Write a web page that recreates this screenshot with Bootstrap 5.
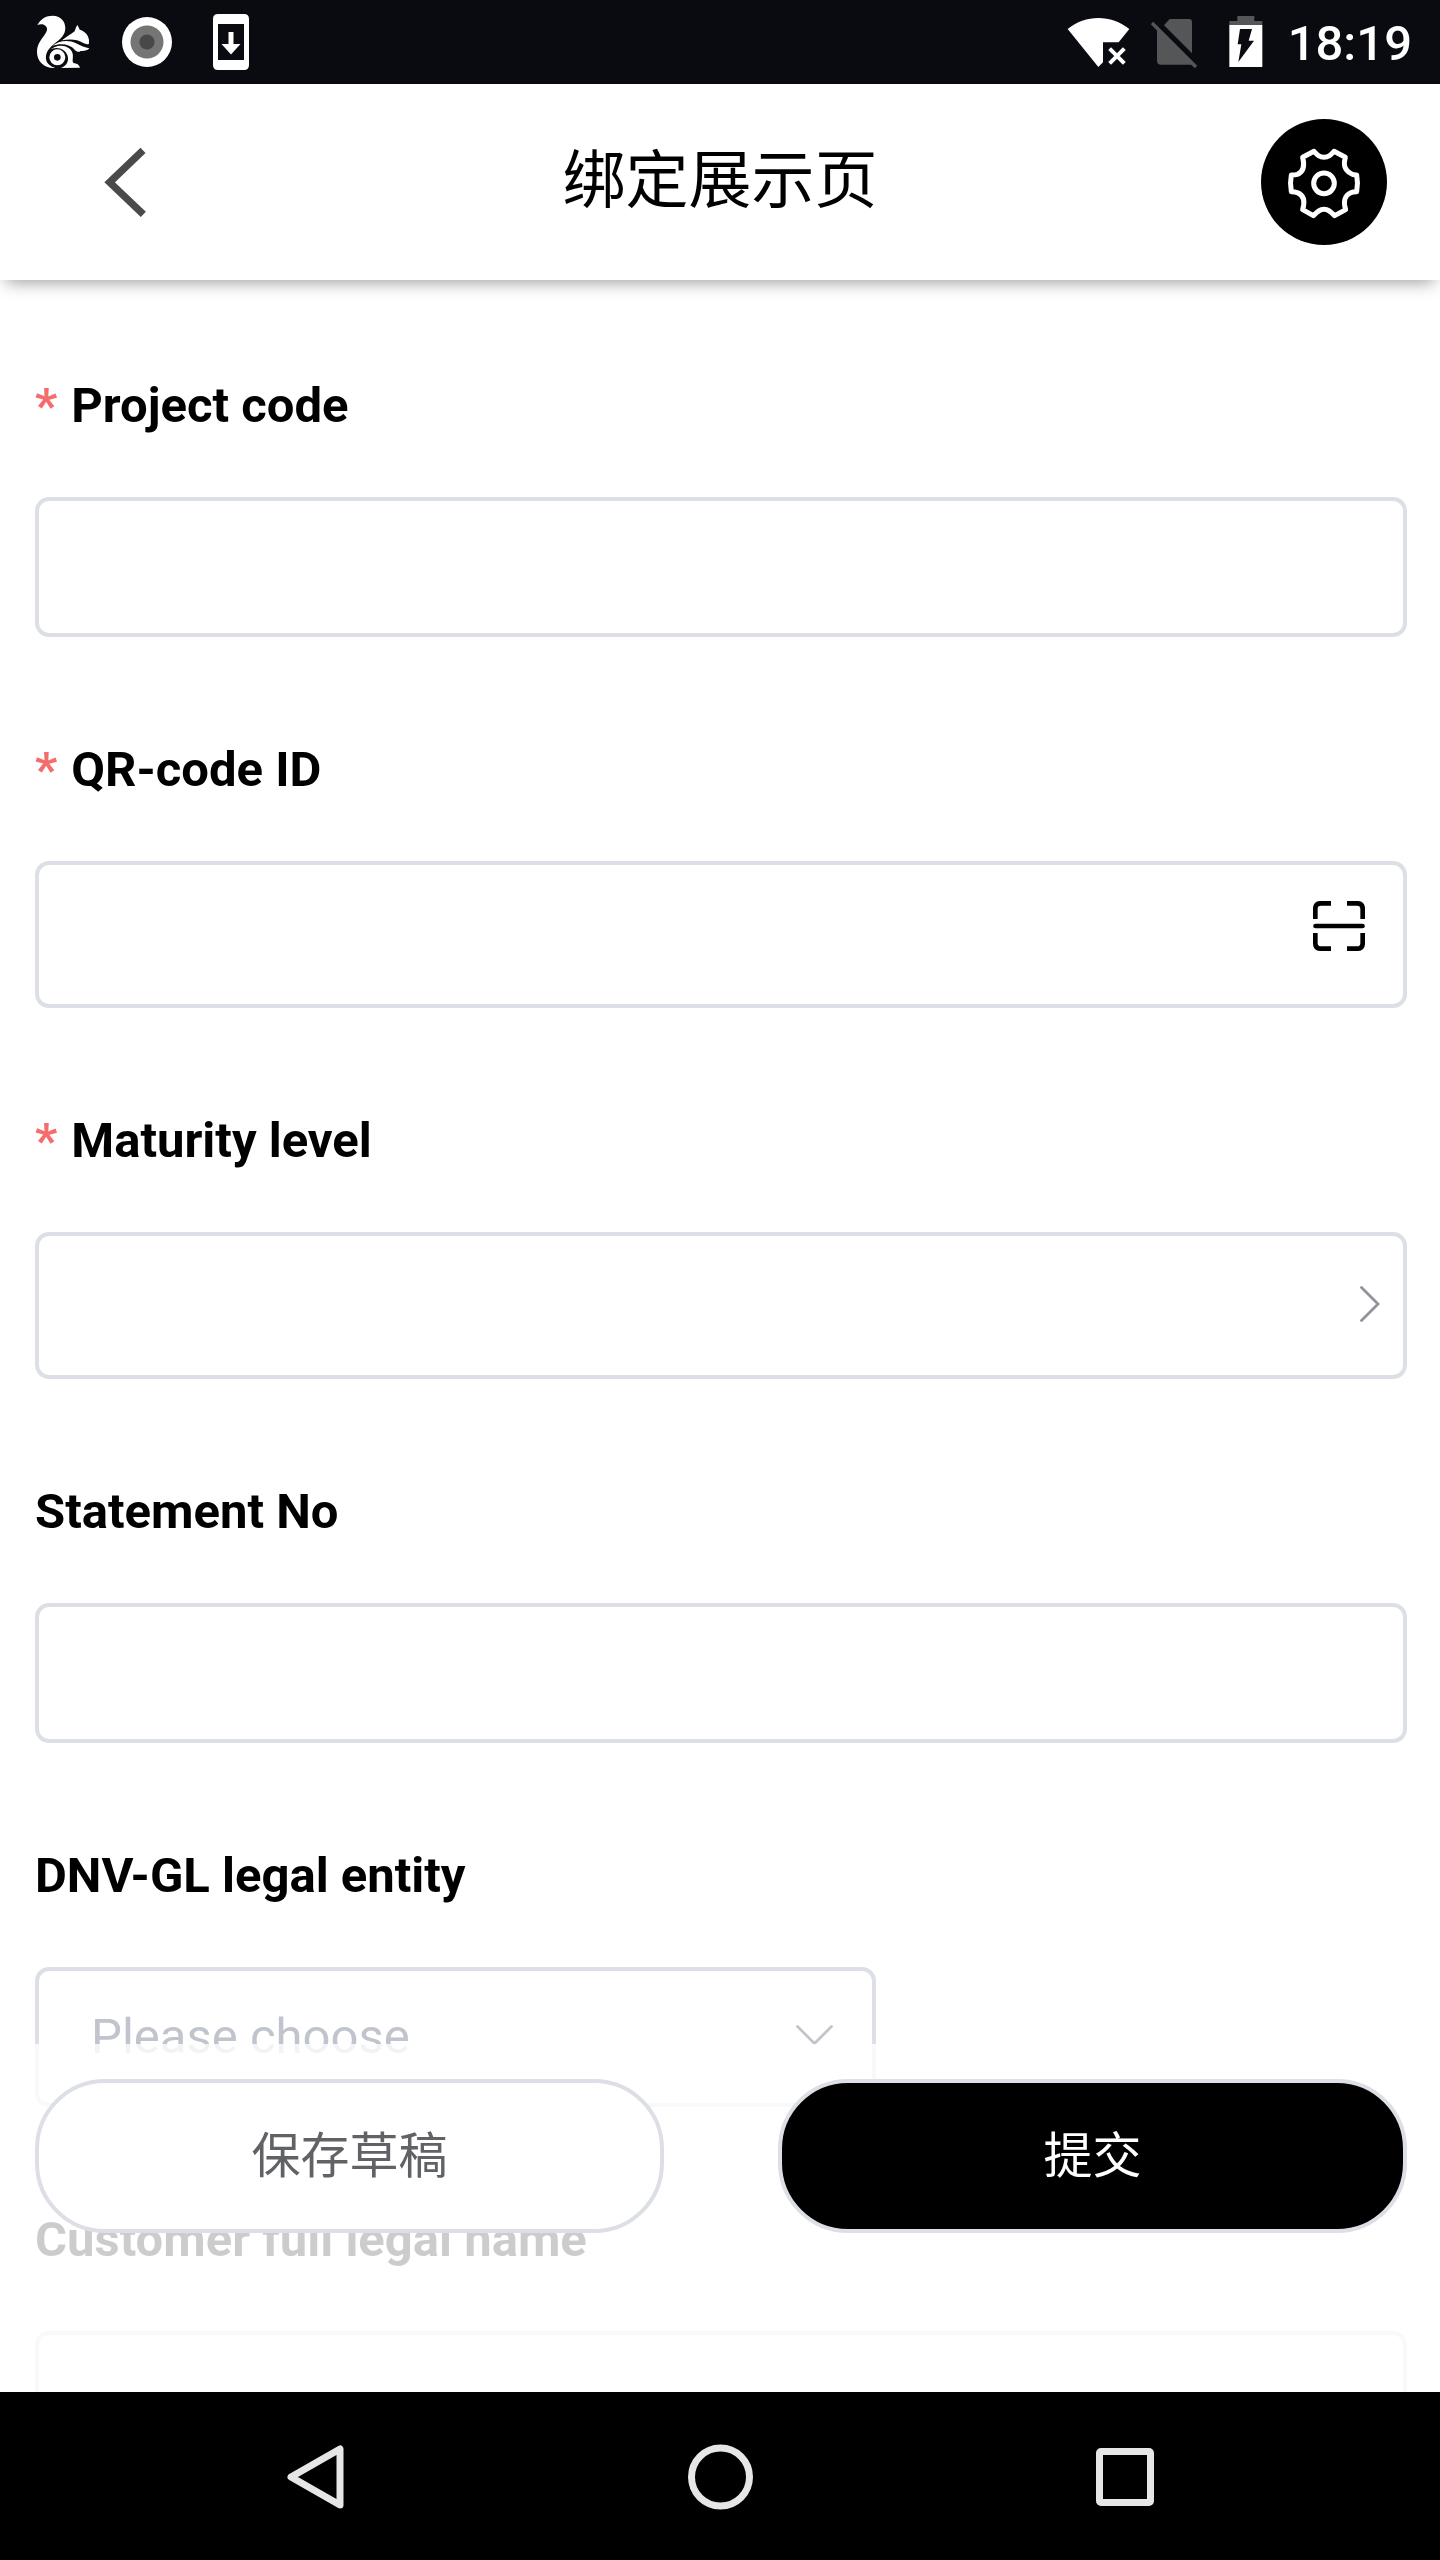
<!DOCTYPE html>
<html lang="zh-CN">
<head>
<meta charset="utf-8">
<meta name="viewport" content="width=device-width, initial-scale=1">
<title>绑定展示页</title>
<link href="https://cdn.jsdelivr.net/npm/bootstrap@5.3.0/dist/css/bootstrap.min.css" rel="stylesheet">
<style>
  body { font-family: Roboto, "Noto Sans CJK SC", sans-serif; font-size: 49px; color: #000; background: #fff; }
  svg { display: block; flex: none; }
  .screen { height: 2560px; }
  .status-bar { height: 84px; background: #0a0b10; padding: 0 28px 0 36px; flex: none; }
  .icon-record { margin-left: 32px; }
  .icon-download { margin-left: 41px; }
  .icon-system { margin-right: -2px; }
  .clock { font-weight: 500; line-height: 84px; padding-top: 2px; }
  .title-bar { height: 196px; flex: none; padding: 0 53px; background: #fff; z-index: 2; box-shadow: 0 8px 16px -6px rgba(0,0,0,.4); }
  .page-title { font-size: 63px; line-height: 1; font-weight: 400; padding-bottom: 3px; }
  .head-btn { width: 126px; height: 126px; padding: 0; border: 0; }
  .back-btn { padding-left: 51px; }
  .form-area { padding: 55px 33px 0 35px; }
  .field { margin-bottom: 62px; }
  .field-label { display: block; height: 140px; line-height: 142px; margin: 0 0 22px; font-weight: 700; white-space: nowrap; }
  .req::before { content: "*"; color: #f56c6c; margin-right: 14px; }
  .field-box { height: 140px; border: 4px solid #dcdfe6; border-radius: 14px; background: #fff; }
  .field-box.tall { height: 147px; }
  .scan-box { padding: 36px 38px 0 0; }
  .level-box { padding: 0 23px 3px 0; }
  .choose { width: 841px; padding: 0 39px 0 52px; color: #c0c4cc; }
  .choose svg { margin-top: -4px; }
  .action-bar { height: 348px; padding: 35px 33px 0 35px; background: rgba(255,255,255,.8); }
  .pill { width: 629px; height: 154px; border: 4px solid #dcdfe6; border-radius: 70px; font-size: 49px; line-height: 1; }
  .pill-plain, .pill-plain:hover { background: #fff; color: #606266; }
  .pill-dark, .pill-dark:hover { background: #000; color: #fff; border-color: #dcdfe6; }
  .nav-keys { height: 168px; flex: none; padding: 1px 285px 0 286px; }
</style>
</head>
<body>
<div class="screen d-flex flex-column overflow-hidden">

  <div class="status-bar d-flex justify-content-between text-white">
    <div class="d-flex align-items-center">
      <svg width="54" height="54" viewBox="108 45 162 162" fill="#fff">
        <path d="M112 76C122 56 138 47 158 47C182 47 196 64 196 84C196 106 180 118 163 131C146 145 136 158 138 178C141 192 152 200 166 204C132 206 111 184 111 156C111 134 122 120 134 104C142 92 144 84 136 77C128 71 118 72 112 76Z"/>
        <path d="M186 121C198 112 210 104 224 94C226 86 229 80 232 75C235 80 237 84 239 89C254 93 265 104 267 120V131C262 134 256 132 250 129C232 117 208 116 186 121Z"/>
        <path d="M156 139C175 122 205 118 228 130C243 138 255 142 268 145C264 152 250 154 242 153C236 158 230 155 224 149C210 133 182 128 156 139Z"/>
        <path d="M148 151C165 134 195 132 210 147C226 162 214 180 220 189C230 190 238 194 240 203L182 204C200 198 207 184 203 168C197 146 168 136 148 151Z"/>
        <circle cx="172" cy="172" r="17" fill="none" stroke="#fff" stroke-width="14"/>
      </svg>
      <svg class="icon-record" width="50" height="50" viewBox="0 0 50 50"><circle cx="25" cy="25" r="25" fill="#fff"/><circle cx="25" cy="25" r="16.500" fill="#757575"/><circle cx="25" cy="25" r="7.600" fill="#484848"/></svg>
      <svg class="icon-download" width="36" height="56" viewBox="0 0 36 56"><path fill="#fff" fill-rule="evenodd" d="M5 0H31Q36 0 36 5V51Q36 56 31 56H5Q0 56 0 51V5Q0 0 5 0ZM5 10V46H31V10Z"/><path fill="#fff" d="M15.500 18H20.500V30H27.500L18 40.500L8.500 30H15.500Z"/></svg>
    </div>
    <div class="d-flex align-items-start">
      <svg class="icon-system" width="223" height="84" viewBox="200 0 669 252">
        <path fill="#fff" d="M202 87C255 43 333 43 387 87L355 127H308V187L294 201Z"/>
        <path stroke="#fff" stroke-width="12" d="M328 146L372 190M372 146L328 190"/>
        <path fill="#555658" d="M508 57H566Q575 57 575 67V160L491 76ZM470 83L580 193L575 194H482Q470 194 470 182Z"/>
        <path stroke="#555658" stroke-width="10" d="M455 69L587 201"/>
        <path fill="#555658" d="M711 48H762V63H786V76H687V63H711Z"/>
        <path fill="#fff" d="M687 75H786V201H687Z"/>
        <path fill="#0a0b10" d="M719 87H755L745 122H761L714 186L723 133H712Z"/>
      </svg>
      <span class="clock">18:19</span>
    </div>
  </div>

  <header class="title-bar d-flex align-items-center justify-content-between position-relative">
    <button class="head-btn back-btn btn" aria-label="返回">
      <svg width="43" height="71" viewBox="313 440 129 213"><path d="M430 450L330 546L431 642" fill="none" stroke="#4a4a4a" stroke-width="22"/></svg>
    </button>
    <h1 class="page-title m-0">绑定展示页</h1>
    <button class="head-btn btn rounded-circle bg-black" aria-label="设置">
      <svg width="126" height="126" viewBox="783 357 378 378" fill="none" stroke="#fff" stroke-width="15" stroke-linejoin="round">
        <path d="M942 454L908 472C914 496 910 516 892 523Q886 525 874 525Q869 550 874 575Q886 575 892 578C912 586 915 606 908 629L940 647C952 635 958 628 972 628C986 628 992 635 1004 647L1037 629C1029 606 1034 586 1052 578Q1058 575 1070 575Q1075 550 1070 525Q1058 525 1052 520C1034 510 1029 496 1036 472L1002 454C992 465 986 472 972 472C958 472 952 465 942 454Z"/>
        <circle cx="972" cy="550" r="31"/>
      </svg>
    </button>
  </header>

  <main class="position-relative flex-grow-1 overflow-hidden">
    <form class="form-area">
      <div class="field"><label class="field-label req">Project code</label><div class="field-box"></div></div>
      <div class="field"><label class="field-label req">QR-code ID</label>
        <div class="field-box tall scan-box d-flex justify-content-end">
          <svg width="52" height="50" viewBox="0 0 52 50" fill="none" stroke="#000" stroke-width="4.700"><path d="M2.300 18V8Q2.300 2.300 8 2.300H18M34 2.300H44Q49.700 2.300 49.700 8V18M2.300 32V42Q2.300 47.700 8 47.700H18M34 47.700H44Q49.700 47.700 49.700 42V32"/><path d="M2.500 25H49.500" stroke-linecap="round"/></svg>
        </div></div>
      <div class="field"><label class="field-label req">Maturity level</label>
        <div class="field-box tall level-box d-flex align-items-center justify-content-end">
          <svg width="20" height="36" viewBox="0 0 20 36" fill="none" stroke="#909399" stroke-width="2.800" stroke-linecap="round"><path d="M1.500 1.500L18 18L1.500 34.500"/></svg>
        </div></div>
      <div class="field"><label class="field-label">Statement No</label><div class="field-box"></div></div>
      <div class="field"><label class="field-label">DNV-GL legal entity</label>
        <div class="field-box choose d-flex align-items-center justify-content-between"><span>Please choose</span>
          <svg width="37" height="21" viewBox="0 0 37 21" fill="none" stroke="#c0c4cc" stroke-width="2.800" stroke-linecap="round"><path d="M1.500 1.500L18.500 18.500L35.500 1.500"/></svg>
        </div></div>
      <div class="field"><label class="field-label">Customer full legal name</label><div class="field-box"></div></div>
    </form>
    <div class="action-bar position-absolute bottom-0 start-0 w-100 d-flex justify-content-between align-items-start">
      <button class="btn pill pill-plain">保存草稿</button>
      <button class="btn pill pill-dark">提交</button>
    </div>
  </main>

  <nav class="nav-keys bg-black d-flex align-items-center justify-content-between">
    <svg width="58" height="66" viewBox="0 0 58 66" fill="none" stroke="#e6e6e6" stroke-width="7" stroke-linejoin="round"><path d="M54 5V61L5 33Z"/></svg>
    <svg width="66" height="66" viewBox="0 0 66 66" fill="none" stroke="#e6e6e6" stroke-width="7"><circle cx="33.500" cy="33" r="29"/></svg>
    <svg width="60" height="60" viewBox="0 0 60 60" fill="none" stroke="#e6e6e6" stroke-width="7"><rect x="4.500" y="4.500" width="51" height="51" rx="1.500"/></svg>
  </nav>
</div>
<script src="https://cdn.jsdelivr.net/npm/bootstrap@5.3.0/dist/js/bootstrap.bundle.min.js"></script>
</body>
</html>
